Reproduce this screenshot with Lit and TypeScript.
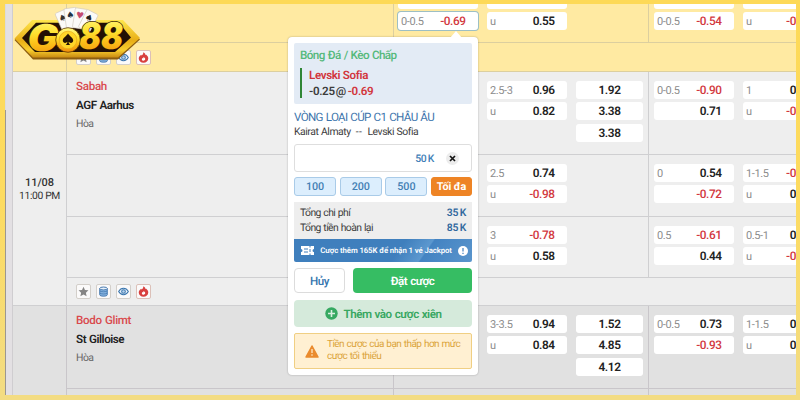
import { LitElement, html, svg, css, nothing } from "lit";
import { customElement, property } from "lit/decorators.js";
import { classMap } from "lit/directives/class-map.js";

type Odd = { line?: string; value: string; active?: boolean };
type Market = { teams?: string[]; ft: Odd[][]; fh: Odd[][]; size: string };

const o = (line: string, value: string, active = false): Odd => ({ line, value, active });

@customElement("odds-stack")
export class OddsStack extends LitElement {
  @property({ attribute: false }) odds: Odd[] = [];
  @property({ type: Boolean }) plain = false;

  static styles = css`
    :host { display: flex; flex-direction: column; gap: 3.35px; width: 80px; flex: none; }
    :host([plain]) { width: 67px; }
    :host([edge]) { width: 53px; }
    .odd { box-sizing: border-box; height: 18px; border-radius: 3px; background: #fff; display: flex; align-items: center; justify-content: space-between; padding: 0 12.4px 0 3px; font-size: 11.8px; letter-spacing: -0.4px; color: #8c8c8c; }
    :host([edge]) .odd { border-radius: 3px 0 0 3px; padding-right: 0; }
    .odd.plain { justify-content: center; padding: 0; }
    .odd.active { box-shadow: 0 0 0 1px #9dbfc4; }
    .line { font-size: 11px; }
    .value { font-weight: 600; color: #222; }
    .value.neg { color: #d2383e; font-weight: 500; }
  `;

  render() {
    return this.odds.map(
      (x) => html`<div class=${classMap({ odd: true, plain: this.plain, active: !!x.active })}>
        ${this.plain ? nothing : html`<span class="line">${x.line}</span>`}
        <span class=${classMap({ value: true, neg: x.value.startsWith("-") })}>${x.value}</span>
      </div>`
    );
  }
}

@customElement("match-tools")
export class MatchTools extends LitElement {
  static styles = css`
    :host { display: flex; align-items: center; gap: 5px; padding-left: 9px; }
    .tool { box-sizing: border-box; width: 15px; height: 15px; border: 1px solid #d3cfca; border-radius: 2px; background: #fbfafa; display: flex; align-items: center; justify-content: center; }
    .tool.hot { border-color: #dcc0b8; }
    svg { width: 11px; height: 11px; flex: none; }
  `;
  render() {
    return html`
      <span class="tool"><svg viewBox="0 0 12 12"><path d="M6 .8 7.6 4.3l3.8.4-2.8 2.6.8 3.8L6 9.2l-3.4 1.9.8-3.8L.6 4.7l3.8-.4z" fill="#858585"/></svg></span>
      <span class="tool"><svg viewBox="0 0 12 12"><path d="M1.9 2.6v7c0 2 8.2 2 8.2 0v-7" fill="#8ab6e2" stroke="#3a70a9"/><ellipse cx="6" cy="2.7" rx="4.1" ry="1.6" fill="#e6f0fa" stroke="#3a70a9"/><path d="M2 5.2c.5 1.5 7.5 1.5 8 0M2 7.6c.5 1.5 7.5 1.5 8 0" fill="none" stroke="#3a70a9" stroke-width=".8"/></svg></span>
      <span class="tool"><svg viewBox="0 0 12 12"><path d="M.7 6C3.3 1.4 8.7 1.4 11.3 6 8.7 10.6 3.3 10.6.7 6z" fill="#edf4fb" stroke="#3a76ae" stroke-width="1.1"/><circle cx="6" cy="6" r="2" fill="#b9d3ec" stroke="#3a76ae" stroke-width="1.1"/></svg></span>
      <span class="tool hot"><svg viewBox="0 0 12 12"><path d="M5.8.3c2 1 2.4 2 2.3 3.1L9 2.9c1.5 1.3 2.2 2.7 2.2 4.2C11.2 10 8.8 11.7 6 11.7S.8 10 .8 7.1c0-2.2 1.5-3.3 2.6-4.2l.5 1C5.1 3.2 5.9 2 5.8.3z" fill="#d8403f"/><path d="M6.1 5.4c1.6 1.1 2 1.9 1.7 2.9-.5 1.5-3 1.6-3.5.1-.3-.9.2-1.5.7-1.9l.6.5z" fill="#fff"/></svg></span>
    `;
  }
}

@customElement("brand-logo")
export class BrandLogo extends LitElement {
  static styles = css`
    :host { display: block; }
    svg { display: block; width: 128px; height: 54px; }
    .letter { font-family: Inter, Roboto, sans-serif; font-weight: 900; font-style: italic; font-size: 37px; paint-order: stroke; stroke: #2b1600; stroke-width: 1.5px; }
    .pip { font-family: "DejaVu Sans", sans-serif; font-size: 9px; }
  `;
  private card(x: number, y: number, angle: number, suit: string, color: string) {
    return svg`<g transform="translate(${x} ${y}) rotate(${angle})">
      <rect x="-6" y="-9" width="12.5" height="20" rx="1.5" fill="#fbfaf8" stroke="#cfc8bd" stroke-width=".6"/>
      <text class="pip" x="-4.5" y="1" fill=${color}>${suit}</text>
    </g>`;
  }
  render() {
    return html`<svg viewBox="13 7 128 54">
      <defs>
        <linearGradient id="rim" x1="0" y1="0" x2="0" y2="1"><stop offset="0" stop-color="#ffe64d"/><stop offset=".55" stop-color="#e8ae17"/><stop offset=".8" stop-color="#f9cf2e"/><stop offset="1" stop-color="#c98a12"/></linearGradient>
        <linearGradient id="gold" x1="0" y1="0" x2="0" y2="1"><stop offset="0" stop-color="#fffb8a"/><stop offset=".42" stop-color="#ffe02e"/><stop offset=".62" stop-color="#fcc21a"/><stop offset="1" stop-color="#f08b0a"/></linearGradient>
      </defs>
      <path d="M14.5 40 32 21.5H123L140 39.5 118 59.5H33z" fill="#8d5d10"/>
      <path d="M14.5 38.5 32 20H123L140 38 118 57.5H33z" fill="url(#rim)"/>
      <path d="M22 38 36 22.8H119L131 37.5 115 52H35z" fill="#231005"/>
      ${this.card(64, 19.5, -24, "♠", "#333")}
      ${this.card(71, 17, -8, "♠", "#234")}
      ${this.card(80, 17.5, 9, "♥", "#c44b70")}
      ${this.card(88.5, 20, 27, "♠", "#222")}
      <text class="letter" x="27.5" y="51" textLength="31" lengthAdjust="spacingAndGlyphs" fill="url(#gold)">G</text>
      <text class="letter" x="79" y="49" textLength="44" lengthAdjust="spacingAndGlyphs" fill="url(#gold)">88</text>
      <circle cx="68" cy="40" r="12.3" fill="url(#gold)" stroke="#5a3403" stroke-width=".8"/>
      <circle cx="68" cy="40" r="8.8" fill="#ffd629" stroke="#e8a71a" stroke-width=".7"/>
      <path d="M68 33.500c1.500 2.700 5.200 4.200 5.200 7 0 2.500-3 3.200-4.600 1.300.2 1.700.8 2.600 1.800 3.200h-4.800c1-.6 1.600-1.500 1.800-3.200-1.600 1.900-4.600 1.200-4.600-1.300 0-2.800 3.700-4.300 5.200-7z" fill="#241304"/>
    </svg>`;
  }
}

@customElement("bet-slip")
export class BetSlip extends LitElement {
  static styles = css`
    :host { display: block; box-sizing: border-box; width: 190px; height: 338px; padding: 6px; background: #fff; border-radius: 4px; box-shadow: 0 0 2px rgba(0,0,0,.3); position: relative; color: #3c3c3c; white-space: nowrap; }
    .arrow { position: absolute; left: 162px; top: -6px; width: 12px; height: 7px; background: #fff; clip-path: polygon(50% 0, 100% 100%, 0 100%); }
    .pick { box-sizing: border-box; height: 61px; background: #e3ebf5; border-radius: 2px; padding: 5px 6px; }
    .kind { font-size: 11.7px; letter-spacing: -0.6px; word-spacing: 0.7px; line-height: 15px; font-weight: 500; color: #55b97b; }
    .choice { margin-top: 5px; height: 30px; border-left: 2px solid #2f8636; padding-left: 7px; font-size: 11.6px; letter-spacing: -0.35px; line-height: 15.5px; font-weight: 600; box-sizing: border-box; }
    .at { margin: 0 2px 0 1px; }
    .red { color: #d2353c; }
    .league { margin-top: 6px; height: 15px; font-size: 11.6px; letter-spacing: -0.65px; word-spacing: 0.6px; line-height: 15px; color: #3d75ac; }
    .fixture { height: 13px; font-size: 10.4px; letter-spacing: -0.45px; word-spacing: 0.5px; line-height: 13px; display: flex; gap: 5px; }
    .versus { letter-spacing: 0.5px; }
    .stake { box-sizing: border-box; height: 28px; margin-top: 6px; border: 1px solid #dedede; border-radius: 3px; display: flex; align-items: center; justify-content: flex-end; gap: 12px; padding-right: 12px; font-size: 10.4px; letter-spacing: -0.4px; word-spacing: -0.5px; font-weight: 500; color: #3f80b7; }
    .clear { width: 13px; height: 13px; border-radius: 50%; background: #ececec; }
    .clear svg { display: block; width: 13px; height: 13px; }
    .chips { margin-top: 5px; display: grid; grid-template-columns: 42px 42px 42px 41px; gap: 3.7px; height: 19px; }
    .chip { box-sizing: border-box; border: 1px solid #a9cbe8; border-radius: 3px; background: #dceefd; display: flex; align-items: center; justify-content: center; font-size: 10.8px; letter-spacing: -0.1px; font-weight: 500; color: #437fb4; }
    .chip.max { background: #ee8425; border-color: #ee8425; color: #fff; font-weight: 700; }
    .totals { margin-top: 6px; box-sizing: border-box; height: 37px; padding: 4px 6px; background: #eee; font-size: 10.4px; letter-spacing: -0.6px; word-spacing: 0.6px; line-height: 14.5px; }
    .total { display: flex; justify-content: space-between; }
    .sum { font-weight: 600; color: #31689d; letter-spacing: -0.3px; word-spacing: -0.7px; }
    .jackpot { height: 23px; display: flex; align-items: center; justify-content: space-between; padding: 0 4px 0 7px; border-radius: 0 0 2px 2px; background: linear-gradient(125deg, #3f7fbd 0 58%, #5c98cf 72%, #4383c2 73%, #5a95cc); color: #fff; font-size: 7.8px; letter-spacing: -0.1px; font-weight: 600; }
    .jackpot svg { display: block; flex: none; }
    .actions { margin-top: 6px; display: flex; gap: 8px; height: 25px; }
    .button { box-sizing: border-box; display: flex; align-items: center; justify-content: center; border-radius: 4px; font-size: 11.6px; letter-spacing: -0.45px; word-spacing: 0.5px; font-weight: 600; }
    .cancel { width: 51px; border: 1px solid #dcdcdc; color: #3675ae; font-weight: 500; }
    .place { flex: 1; background: #36bd63; color: #fff; }
    .combo { margin-top: 7px; height: 27px; gap: 6px; background: #d5eadb; color: #38a761; }
    .warning { box-sizing: border-box; margin-top: 6px; height: 36px; border: 1px solid #f0cf83; border-radius: 2px; background: #fff0d2; color: #dba43b; display: flex; align-items: center; gap: 8px; padding-left: 10px; font-size: 10px; letter-spacing: -0.55px; word-spacing: 0.6px; line-height: 11.6px; }
    .warning svg { flex: none; }
  `;
  render() {
    return html`
      <span class="arrow"></span>
      <div class="pick">
        <div class="kind">Bóng Đá / Kèo Chấp</div>
        <div class="choice"><div class="red">Levski Sofia</div><div>-0.25<span class="at">@</span><span class="red">-0.69</span></div></div>
      </div>
      <div class="league">VÒNG LOẠI CÚP C1 CHÂU ÂU</div>
      <div class="fixture"><span>Kairat Almaty</span><span class="versus">--</span><span>Levski Sofia</span></div>
      <div class="stake"><span>50 K</span><span class="clear"><svg viewBox="0 0 13 13"><path d="m4 4 5 5m0-5-5 5" stroke="#151515" stroke-width="1.7"/></svg></span></div>
      <div class="chips"><span class="chip">100</span><span class="chip">200</span><span class="chip">500</span><span class="chip max">Tối đa</span></div>
      <div class="totals">
        <div class="total"><span>Tổng chi phí</span><span class="sum">35 K</span></div>
        <div class="total"><span>Tổng tiền hoàn lại</span><span class="sum">85 K</span></div>
      </div>
      <div class="jackpot">
        <svg width="13" height="9" viewBox="0 0 13 9"><path d="M0 0H8.5V1.5H9.5V0H13V3a1.5 1.5 0 0 0 0 3V9H9.5V7.5H8.5V9H0V6a1.5 1.5 0 0 0 0-3z" fill="#fff"/><path d="M3 3h4M3 6h4M9 3v3" stroke="#3f7fbd"/></svg>
        <span>Cược thêm 165K để nhận 1 vé Jackpot</span>
        <svg width="10" height="10" viewBox="0 0 10 10"><circle cx="5" cy="5" r="5" fill="#fff"/><path d="M5 2v3.600M5 6.800V8" stroke="#3f7fbd" stroke-width="1.2"/></svg>
      </div>
      <div class="actions"><div class="button cancel">Hủy</div><div class="button place">Đặt cược</div></div>
      <div class="button combo"><svg width="13" height="13" viewBox="0 0 13 13"><circle cx="6.5" cy="6.5" r="6.2" fill="#36a961"/><path d="M6.5 3v7M3 6.5h7" stroke="#d9efe0" stroke-width="1.6"/></svg><span>Thêm vào cược xiên</span></div>
      <div class="warning"><svg width="14" height="13" viewBox="0 0 14 13"><path d="M7 1 13 12H1z" fill="#ea8b2d" stroke="#ea8b2d" stroke-width="1.5" stroke-linejoin="round"/><path d="M7 4v4M7 9.2v1.5" stroke="#fff0d2" stroke-width="1.2"/></svg><span>Tiền cược của bạn thấp hơn mức<br />cược tối thiểu</span></div>
    `;
  }
}

@customElement("app-root")
export class AppRoot extends LitElement {
  static styles = css`
    :host { display: block; box-sizing: border-box; width: 800px; height: 400px; overflow: hidden; position: relative; background: linear-gradient(#fdd957, #fddb60 50%, #f3dc82 98%); padding: 4px 4px 5px 5px; font-family: Roboto, "Noto Sans", sans-serif; text-rendering: geometricPrecision; color: #222; white-space: nowrap; }
    .page { display: flex; height: 391px; overflow: hidden; }
    .gutter { box-sizing: border-box; flex: none; width: 8px; border-right: 1px solid #cfcdd0; background: linear-gradient(#dcdcdc 0 106px, #9c9791 106px) left / 1px 100% no-repeat, #e3e0e3; }
    .board { flex: 1; min-width: 0; }
    .match { display: grid; grid-template-columns: 54px 1fr; background: #eee; --rule: #cfcfd1; }
    .match.live { background: #ffeaa2; --rule: #dccf9f; }
    .match.alt { background: #e1e1e1; --rule: #c9c6ca; }
    .when { box-sizing: border-box; border-right: 1px solid var(--rule); border-bottom: 1px solid var(--rule); display: flex; flex-direction: column; align-items: center; justify-content: center; font-size: 10.3px; letter-spacing: -0.35px; line-height: 13.5px; color: #333; padding-top: 1px; }
    .day { font-size: 11px; font-weight: 500; letter-spacing: -0.1px; }
    .rows { min-width: 0; overflow: hidden; }
    .row { box-sizing: border-box; display: flex; border-bottom: 1px solid var(--rule); }
    .r39 { height: 39px; } .r83 { height: 83px; } .r62 { height: 62px; } .r61 { height: 61px; }
    .tools { height: 28px; } .live .tools { height: 29px; }
    .rest { height: 8px; }
    .side { box-sizing: border-box; flex: none; width: 327px; border-right: 1px solid var(--rule); padding: 5px 0 0 9px; font-size: 11.6px; letter-spacing: -0.45px; word-spacing: 0.5px; line-height: 19px; font-weight: 600; }
    .home { color: #d9494d; font-weight: 500; letter-spacing: -0.3px; }
    .draw { font-size: 10.4px; font-weight: 400; color: #666; line-height: 17.5px; letter-spacing: -0.5px; }
    .market { box-sizing: border-box; flex: none; width: 255px; display: flex; align-items: flex-start; gap: 9px; padding: 9px 0 0 4px; border-right: 1px solid var(--rule); }
    .market.half { width: 148px; border-right: 0; padding-left: 5px; }
    .r39 .market { margin-top: -22px; }
    .blank { width: 80px; flex: none; }
    .logo { position: absolute; left: 13px; top: 7px; }
    .slip { position: absolute; left: 288px; top: 37px; }
  `;

  private row(m: Market) {
    return html`<div class="row ${m.size}">
      <div class="side">
        ${m.teams ? html`<div class="home">${m.teams[0]}</div><div>${m.teams[1]}</div><div class="draw">Hòa</div>` : nothing}
      </div>
      <div class="market">
        ${m.ft.map((s, i) => (s.length ? html`<odds-stack .odds=${s} ?plain=${i === 2}></odds-stack>` : html`<span class="blank"></span>`))}
      </div>
      <div class="market half">${m.fh.map((s, i) => html`<odds-stack .odds=${s} ?edge=${i === 1}></odds-stack>`)}</div>
    </div>`;
  }

  render() {
    const tools = html`<div class="row tools"><match-tools></match-tools></div>`;
    return html`
      <div class="page">
        <div class="gutter"></div>
        <div class="board">
          <section class="match live">
            <div class="when"></div>
            <div class="rows">
              ${this.row({ size: "r39", ft: [[o("", ""), o("0-0.5", "-0.69", true)], [o("", ""), o("u", "0.55")]], fh: [[o("", ""), o("0-0.5", "-0.54")], [o("", ""), o("u", "-0")]] })}
              ${tools}
            </div>
          </section>
          <section class="match">
            <div class="when"><span class="day">11/08</span><span>11:00 PM</span></div>
            <div class="rows">
              ${this.row({ size: "r83", teams: ["Sabah", "AGF Aarhus"], ft: [[], [o("2.5-3", "0.96"), o("u", "0.82")], [o("", "1.92"), o("", "3.38"), o("", "3.38")]], fh: [[o("0-0.5", "-0.90"), o("", "0.71")], [o("1", "0"), o("u", "-0")]] })}
              ${this.row({ size: "r62", ft: [[], [o("2.5", "0.74"), o("u", "-0.98")]], fh: [[o("0", "0.54"), o("", "-0.72")], [o("1-1.5", "-0"), o("u", "0")]] })}
              ${this.row({ size: "r61", ft: [[], [o("3", "-0.78"), o("u", "0.58")]], fh: [[o("0.5", "-0.61"), o("", "0.44")], [o("0.5-1", "0"), o("u", "-0")]] })}
              ${tools}
            </div>
          </section>
          <section class="match alt">
            <div class="when"></div>
            <div class="rows">
              ${this.row({ size: "r83", teams: ["Bodo Glimt", "St Gilloise"], ft: [[], [o("3-3.5", "0.94"), o("u", "0.84")], [o("", "1.52"), o("", "4.85"), o("", "4.12")]], fh: [[o("0-0.5", "0.73"), o("", "-0.93")], [o("1-1.5", "0"), o("u", "0")]] })}
              ${this.row({ size: "rest", ft: [], fh: [] })}
            </div>
          </section>
        </div>
      </div>
      <brand-logo class="logo"></brand-logo>
      <bet-slip class="slip"></bet-slip>
    `;
  }
}
